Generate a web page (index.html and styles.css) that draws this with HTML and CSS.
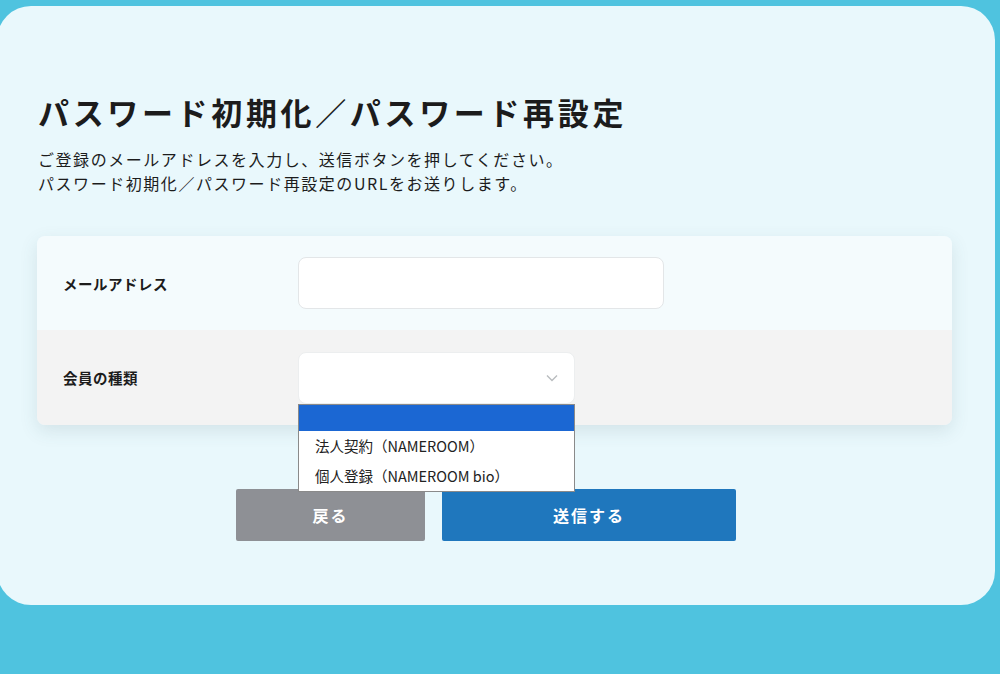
FILE: index.html
```html
<!doctype html>
<html lang="ja">
    <head>
        <meta charset="UTF-8">
        <meta name="viewport" content="width=device-width, initial-scale=1">
        <title>パスワード初期化／パスワード再設定</title>
        <link rel="stylesheet" href="styles.css">
    </head>
    <body>
        <main class="card">
            <h1 class="title">パスワード初期化／パスワード再設定</h1>
            <p class="lead">
                ご登録のメールアドレスを入力し、送信ボタンを押してください。<br>
                パスワード初期化／パスワード再設定のURLをお送りします。
            </p>

            <form class="form">
                <div class="form-panel">
                    <div class="row row-mail">
                        <label class="label" for="mail">メールアドレス</label>
                        <input class="field field-mail" id="mail" type="email">
                    </div>
                    <div class="row row-kind">
                        <span class="label">会員の種類</span>
                        <div class="select-wrap">
                            <div class="field field-select">
                                <svg class="chevron" width="12" height="8" viewBox="0 0 12 8">
                                    <path d="M1 1.5 L6 6.5 L11 1.5" fill="none" stroke="#b9bcbf" stroke-width="1.4"/>
                                </svg>
                            </div>
                            <ul class="options">
                                <li class="option selected">&nbsp;</li>
                                <li class="option">法人契約（NAMEROOM）</li>
                                <li class="option">個人登録（NAMEROOM bio）</li>
                            </ul>
                        </div>
                    </div>
                </div>

                <div class="actions">
                    <button class="btn btn-back" type="button">戻る</button>
                    <button class="btn btn-send" type="submit">送信する</button>
                </div>
            </form>
        </main>
    </body>
</html>
```

FILE: styles.css
```css
:root {
    --sky: #4fc3df;
    --card: #e9f8fc;
    --ink: #1c1c1c;
    --blue: #1f77bd;
}

html, body {
    margin: 0;
    height: 100%;
    background-color: var(--sky);
    overflow: hidden;
}

* {
    font-family: "Noto Sans CJK JP", "Noto Sans", sans-serif;
    color: var(--ink);
    box-sizing: border-box;
}

.card {
    margin: 6px 0 0 -3px;
    width: 998px;
    height: 599px;
    border-radius: 34px;
    background-color: var(--card);
    padding: 84px 43px 0 40px;
}

.title {
    margin: 0;
    font-size: 31px;
    line-height: 44px;
    font-weight: 700;
    letter-spacing: 3.65px;
    padding-left: 1px;
}

.lead {
    margin: 13px 0 0;
    font-size: 16px;
    line-height: 24px;
    letter-spacing: 1.55px;
    padding-left: 1px;
}

.form {
    margin-top: 41px;
}

.form-panel {
    border-radius: 8px;
    box-shadow: 0 6px 18px rgba(60, 90, 100, 0.13);
}

.row {
    display: flex;
    align-items: center;
    height: 94px;
    padding-left: 26px;
}

.row-mail {
    background-color: #f4fbfd;
    border-radius: 8px 8px 0 0;
}

.row-kind {
    background-color: #f3f3f3;
    border-radius: 0 0 8px 8px;
    height: 95px;
}

.label {
    width: 235px;
    font-size: 14.5px;
    font-weight: 700;
    letter-spacing: 0.5px;
}

.field {
    height: 52px;
    border: 1px solid #e3e6e8;
    border-radius: 8px;
    background-color: #fff;
}

.field-mail {
    width: 366px;
    outline: none;
}

.select-wrap {
    position: relative;
}

.field-select {
    width: 277px;
    display: flex;
    align-items: center;
    justify-content: flex-end;
    padding-right: 16px;
    border-color: #eceeef;
}

.options {
    position: absolute;
    top: 52px;
    left: 0;
    width: 277px;
    margin: 0;
    padding: 0;
    list-style: none;
    background-color: #fff;
    border: 1px solid #8a8a8a;
    z-index: 5;
}

.option {
    height: 30px;
    line-height: 30px;
    padding-left: 16px;
    font-size: 14.5px;
    color: #222;
}

.option.selected {
    height: 26px;
    background-color: #1b67d3;
}

.actions {
    display: flex;
    gap: 17px;
    margin-top: 64px;
    padding-left: 199px;
}

.btn {
    height: 52px;
    border: 0;
    border-radius: 2px;
    font-size: 16px;
    font-weight: 700;
    letter-spacing: 2px;
    color: #fff;
}

.btn-back {
    width: 189px;
    background-color: #8e9095;
}

.btn-send {
    width: 294px;
    background-color: var(--blue);
}
```
